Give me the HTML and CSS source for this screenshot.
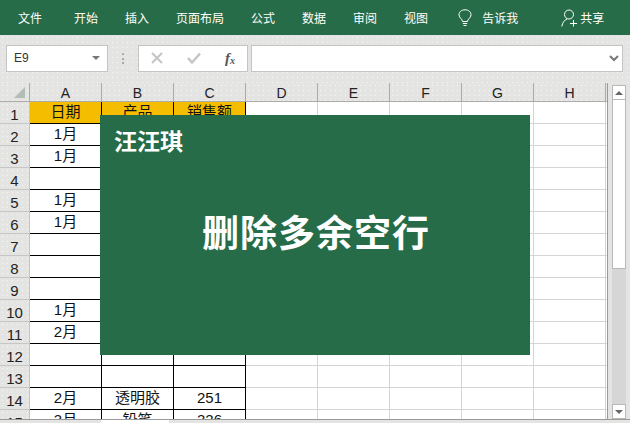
FILE: index.html
```html
<!DOCTYPE html>
<html lang="zh">
<head>
    <meta charset="UTF-8">
    <meta name="viewport" content="width=device-width, initial-scale=1.0">
    <title>删除多余空行</title>
    <link rel="stylesheet" href="styles.css">
</head>
<body>

    <div class="ribbon">
        <span class="tab tab-first">文件</span>
        <span class="tab">开始</span>
        <span class="tab">插入</span>
        <span class="tab">页面布局</span>
        <span class="tab">公式</span>
        <span class="tab">数据</span>
        <span class="tab">审阅</span>
        <span class="tab">视图</span>
        <svg class="bulb" width="14" height="18" viewBox="0 0 14 18" fill="none" stroke="#fff" stroke-width="1">
            <path d="M4.5 12.5C4.5 10 1 9 1 5.8C1 2.8 3.6 .8 7 .8C10.4 .8 13 2.8 13 5.8C13 9 9.5 10 9.5 12.5Z"/>
            <path d="M4.8 14.5H9.2M5.5 16.5H8.5"/>
        </svg>
        <span class="tab tell">告诉我</span>
        <span class="share">
            <svg width="17" height="18" viewBox="0 0 17 18" fill="none" stroke="#fff" stroke-width="1">
                <circle cx="8" cy="5.5" r="4.5"/>
                <path d="M.8 17.5C1.5 13.5 3.5 11 6 10M9 14.5H16M12.5 11V17.5"/>
            </svg>
            <span class="tab">共享</span>
        </span>
    </div>

    <div class="formula-row">
        <div class="name-box">
            <span>E9</span>
            <i class="caret"></i>
        </div>
        <div class="grip"></div>
        <div class="fx-box">
            <svg width="12" height="12" viewBox="0 0 12 12" stroke="#c4c4c4" stroke-width="2" fill="none"><path d="M1 1L11 11M11 1L1 11"/></svg>
            <svg width="14" height="12" viewBox="0 0 14 12" stroke="#c4c4c4" stroke-width="2.4" fill="none"><path d="M1 6L5 10.5L13 1.5"/></svg>
            <span class="fx">f<sub>x</sub></span>
        </div>
        <div class="formula-input">
            <svg width="10" height="7" viewBox="0 0 10 7" stroke="#777" stroke-width="2" fill="none"><path d="M1 1L5 5L9 1"/></svg>
        </div>
    </div>

    <div class="sheet">
        <table class="grid">
            <colgroup>
                <col class="col-head">
                <col class="col"><col class="col"><col class="col"><col class="col">
                <col class="col"><col class="col"><col class="col"><col class="col">
                <col class="col-rest">
            </colgroup>
            <tr class="letters">
                <th class="corner"><i class="corner-mark"></i></th>
                <th>A</th><th>B</th><th>C</th><th>D</th><th>E</th><th>F</th><th>G</th><th>H</th><th class="blank"></th>
            </tr>
            <tr><th>1</th><td class="hd">日期</td><td class="hd">产品</td><td class="hd">销售额</td><td></td><td></td><td></td><td></td><td></td><td></td></tr>
            <tr><th>2</th><td class="b">1月</td><td class="b"></td><td class="b"></td><td></td><td></td><td></td><td></td><td></td><td></td></tr>
            <tr><th>3</th><td class="b">1月</td><td class="b"></td><td class="b"></td><td></td><td></td><td></td><td></td><td></td><td></td></tr>
            <tr><th>4</th><td class="b"></td><td class="b"></td><td class="b"></td><td></td><td></td><td></td><td></td><td></td><td></td></tr>
            <tr><th>5</th><td class="b">1月</td><td class="b"></td><td class="b"></td><td></td><td></td><td></td><td></td><td></td><td></td></tr>
            <tr><th>6</th><td class="b">1月</td><td class="b"></td><td class="b"></td><td></td><td></td><td></td><td></td><td></td><td></td></tr>
            <tr><th>7</th><td class="b"></td><td class="b"></td><td class="b"></td><td></td><td></td><td></td><td></td><td></td><td></td></tr>
            <tr><th>8</th><td class="b"></td><td class="b"></td><td class="b"></td><td></td><td></td><td></td><td></td><td></td><td></td></tr>
            <tr><th>9</th><td class="b"></td><td class="b"></td><td class="b"></td><td></td><td></td><td></td><td></td><td></td><td></td></tr>
            <tr><th>10</th><td class="b">1月</td><td class="b"></td><td class="b"></td><td></td><td></td><td></td><td></td><td></td><td></td></tr>
            <tr><th>11</th><td class="b">2月</td><td class="b"></td><td class="b"></td><td></td><td></td><td></td><td></td><td></td><td></td></tr>
            <tr><th>12</th><td class="b"></td><td class="b"></td><td class="b"></td><td></td><td></td><td></td><td></td><td></td><td></td></tr>
            <tr><th>13</th><td class="b"></td><td class="b"></td><td class="b"></td><td></td><td></td><td></td><td></td><td></td><td></td></tr>
            <tr><th>14</th><td class="b">2月</td><td class="b">透明胶</td><td class="b">251</td><td></td><td></td><td></td><td></td><td></td><td></td></tr>
            <tr><th>15</th><td class="b">3月</td><td class="b">铅笔</td><td class="b">326</td><td></td><td></td><td></td><td></td><td></td><td></td></tr>
        </table>
        <div class="scrollbar">
            <div class="sb-btn"><i class="arrow-up"></i></div>
            <div class="sb-thumb"></div>
            <div class="sb-track"></div>
            <div class="sb-btn"><i class="arrow-down"></i></div>
        </div>
    </div>

    <div class="tabs">
        <div class="sheet-tab"></div>
    </div>

    <!-- title card lying over the sheet -->
    <div class="card">
        <div class="card-name">汪汪琪</div>
        <div class="card-title">删除多余空行</div>
    </div>

</body>
</html>
```

FILE: styles.css
```css
* {
    box-sizing: border-box;
}
html, body {
    height: 100%;
}
body {
    margin: 0;
    overflow: hidden;
    position: relative;
    font-family: "Liberation Sans", "Noto Sans CJK SC", sans-serif;
    background: #e4e4e3;
    color: #111;
}

/* ribbon */
.ribbon {
    height: 35px;
    display: flex;
    align-items: center;
    gap: 27px;
    padding: 0 0 0 18px;
    background: #276c48;
}
.tab {
    font-size: 12px;
    color: #fff;
    white-space: nowrap;
}
.tab-first {
    margin-right: 5px;
}
.bulb {
    margin-left: 3px;
}
.tell {
    margin-left: -17px;
    margin-right: 16px;
}
.share {
    display: flex;
    align-items: center;
    gap: 2px;
}

/* formula bar */
.formula-row {
    height: 48px;
    display: flex;
    align-items: center;
    padding: 0 7px 2px 6px;
    background-color: #e4e4e3;
    background-image: radial-gradient(#f6f6f6 .7px, transparent .8px);
    background-size: 5px 5px;
}
.name-box, .fx-box, .formula-input {
    height: 27px;
    background: #fff;
    border: 1px solid #c4c4c4;
    display: flex;
    align-items: center;
}
.name-box {
    width: 102px;
    justify-content: space-between;
    padding: 0 7px;
    font-size: 12px;
    color: #333;
}
.caret {
    border-left: 4px solid transparent;
    border-right: 4px solid transparent;
    border-top: 4px solid #777;
}
.grip {
    width: 2px;
    height: 11px;
    margin: 0 14px;
    border-left: 2px dotted #aaa;
}
.fx-box {
    width: 110px;
    margin-right: 3px;
    padding: 0 12px 0 12px;
    justify-content: space-between;
}
.fx {
    font-family: "Liberation Serif", serif;
    font-style: italic;
    font-weight: bold;
    font-size: 15px;
    color: #555;
}
.fx sub {
    font-size: 10px;
    vertical-align: -1px;
}
.formula-input {
    flex: 1;
    justify-content: flex-end;
    padding-right: 3px;
}

/* sheet */
.sheet {
    height: 336px;
    display: flex;
    overflow: hidden;
}
.grid {
    width: 607px;
    flex: none;
    align-self: flex-start;
    table-layout: fixed;
    border-collapse: separate;
    border-spacing: 0;
    background: #fff;
}
.col-head {
    width: 30px;
}
.col {
    width: 72px;
}
.col-rest {
    width: 1px;
}
.grid th {
    padding: 5px 0 0 0;
    height: 22px;
    font-weight: normal;
    font-size: 15px;
    line-height: 16px;
    text-align: center;
    color: #222;
    background-color: #e4e4e3;
    background-image: radial-gradient(#f6f6f6 .7px, transparent .8px);
    background-size: 5px 5px;
    border-right: 1px solid #c6c6c6;
    border-bottom: 1px solid #c6c6c6;
}
.letters th {
    height: 19px;
    padding: 2px 0 0 0;
    font-size: 14px;
    border-right-color: #ababab;
    border-bottom-color: #ababab;
}
.letters th.blank {
    border-right: 0;
}
.corner {
    position: relative;
}
.corner-mark {
    position: absolute;
    right: 4px;
    bottom: 3px;
    border-left: 11px solid transparent;
    border-bottom: 11px solid #b4bcb8;
}
.grid td {
    height: 22px;
    padding: 0 0 1px 0;
    font-size: 15px;
    line-height: 16px;
    text-align: center;
    color: #111;
    white-space: nowrap;
    overflow: hidden;
    border-right: 1px solid #d4d4d4;
    border-bottom: 1px solid #d4d4d4;
}
.grid td.b {
    border-right-color: #000;
    border-bottom-color: #000;
}
.grid td.hd {
    background: #f5bd00;
    border-right-color: #000;
    border-bottom-color: #000;
}
.grid td:last-child {
    border-right: 0;
}

/* vertical scrollbar */
.scrollbar {
    flex: 1;
    display: flex;
    flex-direction: column;
    padding: 2px 4px 0 4px;
    border-left: 1px solid #9a9a9a;
    background: #e4e4e3;
}
.sb-btn {
    height: 15px;
    flex: none;
    background: #fff;
    border: 1px solid #b8b8b8;
    display: flex;
    align-items: center;
    justify-content: center;
}
.arrow-up {
    border-left: 4px solid transparent;
    border-right: 4px solid transparent;
    border-bottom: 4px solid #666;
}
.arrow-down {
    border-left: 4px solid transparent;
    border-right: 4px solid transparent;
    border-top: 4px solid #666;
}
.sb-thumb {
    height: 169px;
    flex: none;
    background: #fff;
    border: 1px solid #b8b8b8;
    border-top: 0;
}
.sb-track {
    flex: 1;
    background: #d6d6d6;
}

/* sheet tabs strip */
.tabs {
    height: 4px;
    padding-left: 101px;
    background: #e4e4e3;
    border-top: 1px solid #9a9a9a;
}
.sheet-tab {
    width: 68px;
    height: 3px;
    background: #fff;
}

/* title card */
.card {
    position: absolute;
    left: 100px;
    top: 115px;
    width: 430px;
    height: 240px;
    background: #276c48;
    color: #fff;
    font-weight: bold;
    padding: 13px 0 0 14px;
}
.card-name {
    font-size: 23px;
    line-height: 28px;
}
.card-title {
    margin: 55px 0 0 88px;
    font-size: 37px;
    letter-spacing: 1px;
    line-height: 48px;
    white-space: nowrap;
}
```
